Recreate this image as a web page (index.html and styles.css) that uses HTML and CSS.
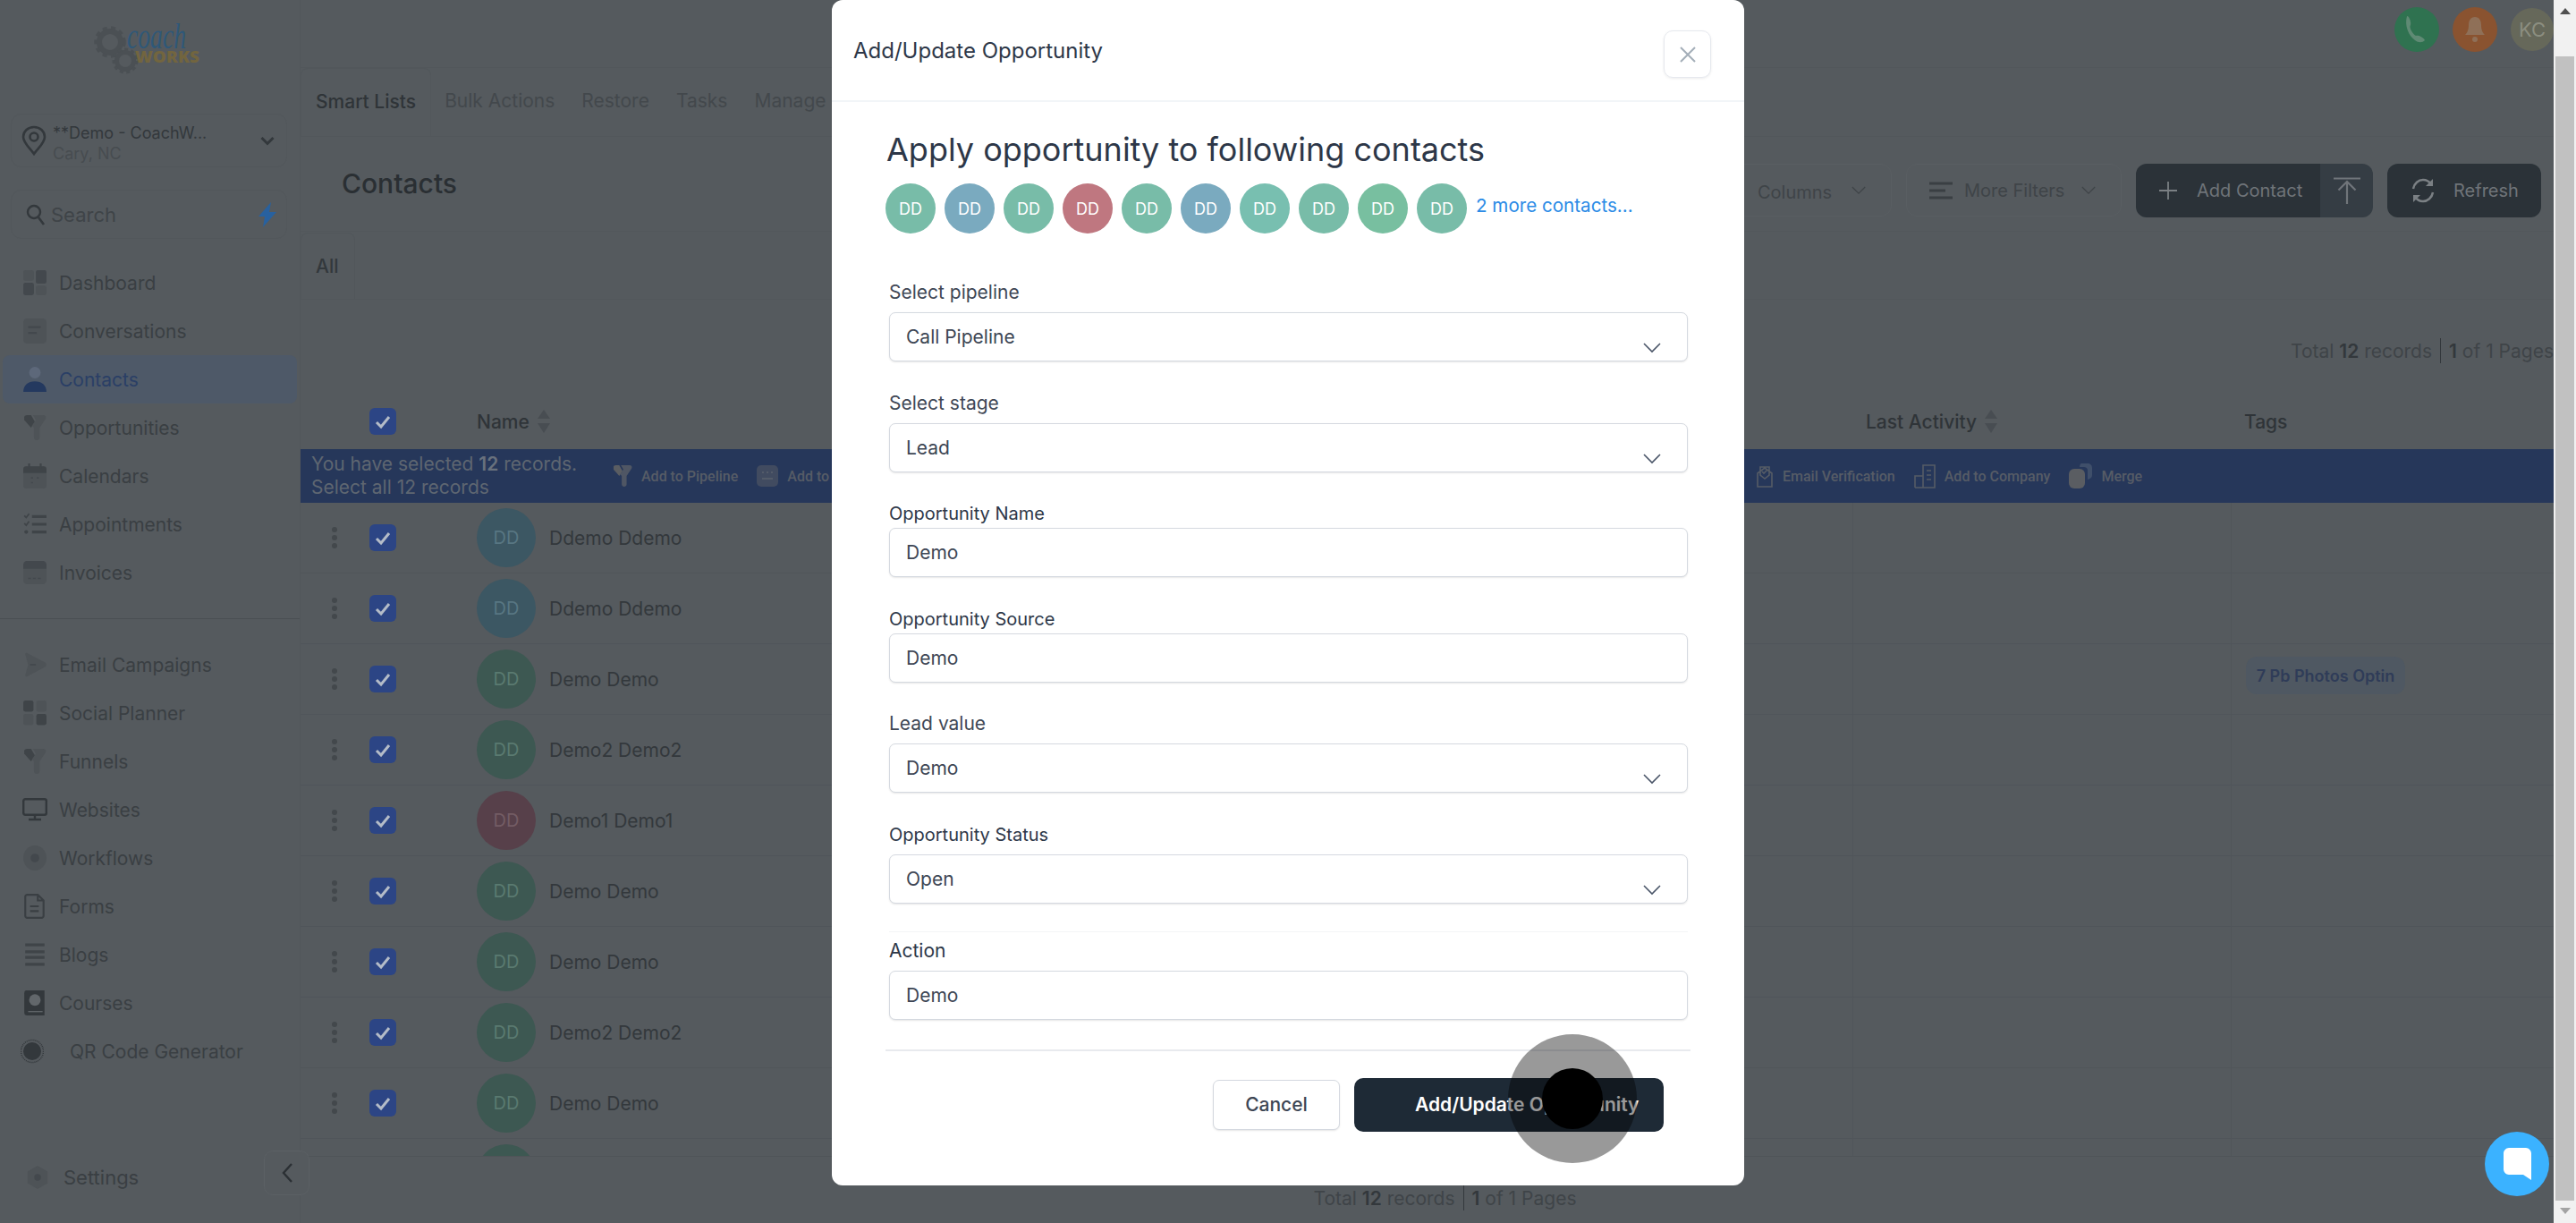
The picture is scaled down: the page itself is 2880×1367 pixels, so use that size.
FILE: index.html
```html
<!DOCTYPE html>
<html lang="en">
<head>
<meta charset="utf-8">
<title>Contacts</title>
<link rel="stylesheet" href="styles.css">
</head>
<body>
<svg class="sprite" aria-hidden="true">
  <symbol id="funnel" viewBox="0 0 24 26"><path d="M1 2c0-1 1-2 3-2h4l4 7-4 6L1 5z" fill="#3f4448"/><path d="M10 0h11c2 0 3 2 2 4l-6 9v10c0 4-6 4-6 0V13L9 11l4-6z" fill="#4e5357"/></symbol>
  <symbol id="sort" viewBox="0 0 16 28"><path d="M8 1l7 10H1z M1 16h14L8 27z" fill="#484d52"/></symbol>
  <symbol id="check" viewBox="0 0 30 30"><rect width="30" height="30" rx="6" fill="#2c4585"/><path d="M8 16l5 5 9-11" fill="none" stroke="#b4bcc8" stroke-width="3"/></symbol>
  <symbol id="dots" viewBox="0 0 8 26"><circle cx="4" cy="4" r="3" fill="#43484c"/><circle cx="4" cy="13" r="3" fill="#43484c"/><circle cx="4" cy="22" r="3" fill="#43484c"/></symbol>
  <symbol id="chev" viewBox="0 0 20 12"><path d="M1 1l9 9 9-9" fill="none" stroke="currentColor" stroke-width="1.6"/></symbol>
</svg>

<div class="page">
  <div class="app">
    <aside class="side">
      <div class="logo">
        <svg width="124" height="70" viewBox="0 0 124 70">
          <g fill="none" stroke="#4b5054">
            <circle cx="19" cy="33" r="12" stroke-width="6"/>
            <circle cx="19" cy="33" r="16" stroke-width="3.5" stroke-dasharray="5 4.5"/>
            <circle cx="36" cy="54" r="9.5" stroke-width="5"/>
            <circle cx="36" cy="54" r="13" stroke-width="3" stroke-dasharray="4 3.5"/>
          </g>
          <text class="logo-coach" x="38" y="40" textLength="66" lengthAdjust="spacingAndGlyphs">coach</text>
          <text class="logo-works" x="47" y="56" textLength="72" lengthAdjust="spacingAndGlyphs">WORKS</text>
        </svg>
      </div>
      <div class="loc">
        <svg class="pin" width="28" height="34" viewBox="0 0 28 34"><path d="M14 2C7 2 2 7 2 13c0 7 8 13 12 19 4-6 12-12 12-19 0-6-5-11-12-11z" fill="none" stroke="#33383c" stroke-width="2.6"/><circle cx="14" cy="13" r="4.5" fill="none" stroke="#33383c" stroke-width="2.6"/></svg>
        <div class="loc-text"><div class="loc-name">**Demo - CoachW...</div><div class="loc-sub">Cary, NC</div></div>
        <svg class="loc-chev" width="16" height="11" viewBox="0 0 16 11"><path d="M1.5 2l6.5 6.5L14.500 2" fill="none" stroke="#33383c" stroke-width="3"/></svg>
      </div>
      <div class="search">
        <svg width="22" height="26" viewBox="0 0 22 26"><circle cx="9" cy="10" r="7" fill="none" stroke="#33383c" stroke-width="2.4"/><path d="M14 16l6 8" stroke="#33383c" stroke-width="2.6"/></svg>
        <span class="search-text">Search</span>
        <svg class="bolt" width="20" height="28" viewBox="0 0 20 28"><path d="M14 0L0 16h7L5 28l15-17h-8l2-11z" fill="#28619f"/></svg>
      </div>
      <nav class="nav nav-a">
        <a class="nav-item"><svg class="ni" viewBox="0 0 24 26"><rect width="11" height="11" rx="2" fill="#4e5357"/><rect x="13" width="11" height="14" rx="2" fill="#43484d"/><rect y="13" width="11" height="13" rx="2" fill="#43484d"/><rect x="13" y="16" width="11" height="10" rx="2" fill="#4e5357"/></svg>Dashboard</a>
        <a class="nav-item"><svg class="ni" viewBox="0 0 24 26"><rect width="24" height="26" rx="4" fill="#4e5357"/><path d="M5 9h13M5 15h9" stroke="#43484d" stroke-width="2"/></svg>Conversations</a>
        <a class="nav-item active"><svg class="ni" viewBox="0 0 24 26"><circle cx="12" cy="6" r="6" fill="#5d687a"/><path d="M0 26c0-7 5-11 12-11s12 4 12 11z" fill="#24395f"/></svg>Contacts</a>
        <a class="nav-item"><svg class="ni" viewBox="0 0 24 26"><use href="#funnel"/></svg>Opportunities</a>
        <a class="nav-item"><svg class="ni" viewBox="0 0 24 26"><rect y="3" width="24" height="23" rx="3" fill="#4e5357"/><path d="M0 10V6c0-2 1-3 3-3h18c2 0 3 1 3 3v4z" fill="#3f4448"/><path d="M6 0v5M18 0v5" stroke="#3f4448" stroke-width="2"/><path d="M8 15h2M14 15h2M8 20h2" stroke="#43484d" stroke-width="1.500"/></svg>Calendars</a>
        <a class="nav-item"><svg class="ni" viewBox="0 0 24 26"><path d="M9 5h15M9 13h15M9 21h15" stroke="#3f4448" stroke-width="3"/><path d="M1 4l2 2 3-4M1 12l2 2 3-4" fill="none" stroke="#3f4448" stroke-width="1.600"/><circle cx="3" cy="21" r="2" fill="#3f4448"/></svg>Appointments</a>
        <a class="nav-item"><svg class="ni" viewBox="0 0 24 26"><rect y="1" width="24" height="24" rx="4" fill="#4e5357"/><path d="M0 9V5c0-2 2-4 4-4h16c2 0 4 2 4 4v4z" fill="#43484d"/><path d="M5 19h3M10 19h3M15 19h3" stroke="#43484d" stroke-width="1.500"/></svg>Invoices</a>
      </nav>
      <nav class="nav nav-b">
        <a class="nav-item"><svg class="ni" viewBox="0 0 24 26"><path d="M2 2c0-1 1-2 2-1l19 10c1 1 1 3 0 4L4 25c-1 1-2 0-2-1l3-11z" fill="#4e5357"/><path d="M7 13h6" stroke="#43484d" stroke-width="1.500"/></svg>Email Campaigns</a>
        <a class="nav-item"><svg class="ni" viewBox="0 0 24 26"><rect width="10.500" height="11.500" rx="2" fill="#3f4448"/><rect x="13.500" width="10.500" height="11.500" rx="2" fill="#4e5357"/><rect y="14" width="10.500" height="11.500" rx="2" fill="#4e5357"/><rect x="13.500" y="14" width="10.500" height="11.500" rx="2" fill="#3f4448"/></svg>Social Planner</a>
        <a class="nav-item"><svg class="ni" viewBox="0 0 24 26"><use href="#funnel"/></svg>Funnels</a>
        <a class="nav-item"><svg class="ni ni-w" viewBox="0 0 28 26"><rect x="1.200" y="1.200" width="25.600" height="17.600" rx="2" fill="none" stroke="#33383c" stroke-width="2.400"/><path d="M14 19v4M7 24h14" stroke="#33383c" stroke-width="2.400"/></svg>Websites</a>
        <a class="nav-item"><svg class="ni" viewBox="0 0 24 26"><ellipse cx="12" cy="13" rx="12" ry="13" fill="#4e5357"/><circle cx="12" cy="13" r="4.500" fill="#43484d"/></svg>Workflows</a>
        <a class="nav-item"><svg class="ni" viewBox="0 0 24 26"><path d="M4 1h11l6 6v16c0 1-1 2-2 2H4c-1 0-2-1-2-2V3c0-1 1-2 2-2z M15 1v6h6" fill="none" stroke="#3a3f43" stroke-width="2"/><path d="M7 13h9M7 18h9" stroke="#3a3f43" stroke-width="2"/></svg>Forms</a>
        <a class="nav-item"><svg class="ni" viewBox="0 0 24 26"><path d="M2 3h20M2 10h20M2 16h20M2 23h20" stroke="#3f4448" stroke-width="3"/></svg>Blogs</a>
        <a class="nav-item"><svg class="ni" viewBox="0 0 24 26"><path d="M3 0h19v26H4c-2 0-3-1-3-3V3c0-2 1-3 2-3z" fill="#33383c"/><circle cx="12" cy="10" r="6" fill="#62676b"/><path d="M5 22h15" stroke="#62676b" stroke-width="1.200"/></svg>Courses</a>
        <a class="nav-item nav-qr"><svg class="ni" viewBox="0 0 26 26"><circle cx="13" cy="13" r="12.500" fill="none" stroke="#33383c" stroke-width="1.500" stroke-dasharray="1 1"/><circle cx="13" cy="13" r="10" fill="#33383c"/></svg>QR Code Generator</a>
      </nav>
      <a class="settings"><svg class="ni" viewBox="0 0 28 28"><path d="M14 0l12 7v14l-12 7-12-7V7z" fill="#4e5357"/><circle cx="14" cy="14" r="4" fill="#43484d"/></svg>Settings</a>
      <button class="collapse"><svg width="14" height="24" viewBox="0 0 14 24"><path d="M12 2L3 12l9 10" fill="none" stroke="#2b3034" stroke-width="2.400"/></svg></button>
    </aside>

    <main class="main">
      <header class="topbar">
        <span class="circle circle-phone"><svg width="30" height="32" viewBox="0 0 30 32"><path d="M4 1c3 0 5 8 4 10-2 2 2 10 6 12 2-1 8 1 10 5-3 3-7 3-11 0C6 23 1 12 4 1z" fill="#5f8a74"/></svg></span>
        <span class="circle circle-bell"><svg width="24" height="30" viewBox="0 0 24 30"><path d="M12 1c-5 0-7 4-7 9 0 6-2 9-4 11h22c-2-2-4-5-4-11 0-5-2-9-7-9z" fill="#8f7058"/><circle cx="12" cy="26" r="3" fill="#8f7058"/></svg></span>
        <span class="circle circle-kc">KC</span>
      </header>
      <div class="tabs">
        <a class="tab tab-on">Smart Lists</a><a class="tab">Bulk Actions</a><a class="tab">Restore</a><a class="tab">Tasks</a><a class="tab">Manage</a>
      </div>
      <section class="head">
        <h1>Contacts</h1>
        <div class="head-actions">
          <button class="btn btn-columns">Columns<svg class="chev" width="16" height="10"><use href="#chev"/></svg></button>
          <button class="btn btn-filters"><svg width="26" height="20" viewBox="0 0 26 20"><path d="M0 2h26M0 10h18M0 18h26" stroke="#3a3f43" stroke-width="3"/></svg>More Filters<svg class="chev" width="16" height="10"><use href="#chev"/></svg></button>
          <div class="btn-split">
            <button class="btn-dark btn-add"><svg width="20" height="20" viewBox="0 0 20 20"><path d="M10 0v20M0 10h20" stroke="#7b8084" stroke-width="1.800"/></svg>Add Contact</button>
            <button class="btn-dark btn-up"><svg width="30" height="30" viewBox="0 0 30 30"><path d="M0 1.500h30M15 5v25M5.500 14.500L15 5l9.500 9.500" fill="none" stroke="#70757a" stroke-width="2.200"/></svg></button>
          </div>
          <button class="btn-dark btn-refresh"><svg width="30" height="30" viewBox="0 0 30 30"><path d="M4 13C5 7 10 3 15 3c4 0 7 2 9 5M26 17c-1 6-6 10-11 10-4 0-7-2-9-5" fill="none" stroke="#7b8084" stroke-width="2.500"/><path d="M26 2v8h-8zM4 28v-8h8z" fill="#7b8084"/></svg>Refresh</button>
        </div>
      </section>
      <div class="subtabs"><a class="subtab">All</a></div>
      <div class="total total-top"><span>Total <b>12</b> records</span><i></i><span><b>1</b> of 1 Pages</span></div>
      <div class="grid thead">
        <span></span>
        <svg class="cb" width="30" height="30"><use href="#check"/></svg>
        <span class="th">Name<svg width="16" height="28"><use href="#sort"/></svg></span>
        <span class="th th-pad">Last Activity<svg width="16" height="28"><use href="#sort"/></svg></span>
        <span class="th th-pad">Tags</span>
      </div>
      <div class="bar">
        <div class="bar-text">You have selected <b>12</b> records.<br>Select all 12 records</div>
        <div class="bar-group bar-left">
          <span class="act"><svg width="22" height="24" viewBox="0 0 24 26"><path d="M1 2c0-1 1-2 3-2h4l4 7-4 6L1 5z" fill="#5a5d62"/><path d="M10 0h11c2 0 3 2 2 4l-6 9v10c0 4-6 4-6 0V13L9 11l4-6z" fill="#4f5664"/></svg>Add to Pipeline</span>
          <span class="act"><svg width="24" height="24" viewBox="0 0 24 24"><rect width="24" height="24" rx="5" fill="#414b60"/><path d="M6 8h2M11 8h2M16 8h2M6 15h12" stroke="#5a616c" stroke-width="1.500"/></svg>Add to</span>
        </div>
        <div class="bar-group">
          <span class="act"><svg width="20" height="28" viewBox="0 0 20 28"><path d="M2 11l8-6 8 6v15H2zM5 4h10v9l-5 4-5-4z" fill="none" stroke="#565c66" stroke-width="1.600"/><path d="M7 9l2 2 4-4" fill="none" stroke="#565c66" stroke-width="1.600"/></svg>Email Verification</span>
          <span class="act"><svg width="24" height="28" viewBox="0 0 24 28"><path d="M1 27V14h9M10 27V2h13v25zM1 27h22M14 8h5M14 13h5M14 18h5" fill="none" stroke="#565c66" stroke-width="1.600"/></svg>Add to Company</span>
          <span class="act"><svg width="26" height="28" viewBox="0 0 26 28"><path d="M14 0h7c3 0 5 2 5 5v8c0 3-2 4-5 5V8c0-3-2-4-5-4h-4c0-2 1-4 2-4z" fill="#3f4f6a"/><rect y="6" width="18" height="22" rx="6" fill="#5a5d62"/></svg>Merge</span>
        </div>
      </div>
      <div class="rows">
        <div class="grid row"><svg class="dots" width="8" height="26"><use href="#dots"/></svg><svg class="cb" width="30" height="30"><use href="#check"/></svg><span class="who"><span class="av av-blue">DD</span>Ddemo Ddemo</span><span class="cell"></span><span class="cell"></span></div>
        <div class="grid row"><svg class="dots" width="8" height="26"><use href="#dots"/></svg><svg class="cb" width="30" height="30"><use href="#check"/></svg><span class="who"><span class="av av-blue">DD</span>Ddemo Ddemo</span><span class="cell"></span><span class="cell"></span></div>
        <div class="grid row"><svg class="dots" width="8" height="26"><use href="#dots"/></svg><svg class="cb" width="30" height="30"><use href="#check"/></svg><span class="who"><span class="av av-green">DD</span>Demo Demo</span><span class="cell"></span><span class="cell"><span class="tag">7 Pb Photos Optin</span></span></div>
        <div class="grid row"><svg class="dots" width="8" height="26"><use href="#dots"/></svg><svg class="cb" width="30" height="30"><use href="#check"/></svg><span class="who"><span class="av av-green">DD</span>Demo2 Demo2</span><span class="cell"></span><span class="cell"></span></div>
        <div class="grid row"><svg class="dots" width="8" height="26"><use href="#dots"/></svg><svg class="cb" width="30" height="30"><use href="#check"/></svg><span class="who"><span class="av av-red">DD</span>Demo1 Demo1</span><span class="cell"></span><span class="cell"></span></div>
        <div class="grid row"><svg class="dots" width="8" height="26"><use href="#dots"/></svg><svg class="cb" width="30" height="30"><use href="#check"/></svg><span class="who"><span class="av av-green">DD</span>Demo Demo</span><span class="cell"></span><span class="cell"></span></div>
        <div class="grid row"><svg class="dots" width="8" height="26"><use href="#dots"/></svg><svg class="cb" width="30" height="30"><use href="#check"/></svg><span class="who"><span class="av av-green">DD</span>Demo Demo</span><span class="cell"></span><span class="cell"></span></div>
        <div class="grid row"><svg class="dots" width="8" height="26"><use href="#dots"/></svg><svg class="cb" width="30" height="30"><use href="#check"/></svg><span class="who"><span class="av av-green">DD</span>Demo2 Demo2</span><span class="cell"></span><span class="cell"></span></div>
        <div class="grid row"><svg class="dots" width="8" height="26"><use href="#dots"/></svg><svg class="cb" width="30" height="30"><use href="#check"/></svg><span class="who"><span class="av av-green">DD</span>Demo Demo</span><span class="cell"></span><span class="cell"></span></div>
        <div class="grid row"><span></span><span></span><span class="who"><span class="av av-green"></span></span><span class="cell"></span><span class="cell"></span></div>
      </div>
      <div class="foot"><div class="total"><span>Total <b>12</b> records</span><i></i><span><b>1</b> of 1 Pages</span></div></div>
    </main>
  </div>

  <div class="scrollbar">
    <div class="sb-up"><span class="tri tri-up"></span></div>
    <div class="sb-thumb"></div>
    <div class="sb-down"><span class="tri tri-down"></span></div>
  </div>

  <section class="modal">
    <header class="modal-head">
      <span class="modal-title">Add/Update Opportunity</span>
      <button class="modal-x"><svg width="20" height="20" viewBox="0 0 20 20"><path d="M2 2l16 16M18 2L2 18" stroke="#a3aeb8" stroke-width="2"/></svg></button>
    </header>
    <div class="modal-body">
      <h2>Apply opportunity to following contacts</h2>
      <div class="people">
        <span class="pa pa-g">DD</span><span class="pa pa-b">DD</span><span class="pa pa-g">DD</span><span class="pa pa-r">DD</span><span class="pa pa-g">DD</span><span class="pa pa-b">DD</span><span class="pa pa-t">DD</span><span class="pa pa-g">DD</span><span class="pa pa-l">DD</span><span class="pa pa-g">DD</span>
        <a class="more">2 more contacts...</a>
      </div>
      <form class="form">
        <div class="field"><label class="lab lab-sel">Select pipeline</label><div class="box">Call Pipeline<svg class="box-chev" width="20" height="12"><use href="#chev"/></svg></div></div>
        <div class="field"><label class="lab lab-sel">Select stage</label><div class="box">Lead<svg class="box-chev" width="20" height="12"><use href="#chev"/></svg></div></div>
        <div class="field"><label class="lab lab-txt lab-dark">Opportunity Name</label><div class="box">Demo</div></div>
        <div class="field"><label class="lab lab-txt lab-dark">Opportunity Source</label><div class="box">Demo</div></div>
        <div class="field"><label class="lab lab-sel">Lead value</label><div class="box">Demo<svg class="box-chev" width="20" height="12"><use href="#chev"/></svg></div></div>
        <div class="field"><label class="lab lab-sel lab-dark">Opportunity Status</label><div class="box">Open<svg class="box-chev" width="20" height="12"><use href="#chev"/></svg></div></div>
        <div class="field field-action"><label class="lab lab-sel lab-action">Action</label><div class="box">Demo</div></div>
      </form>
      <footer class="modal-foot">
        <button class="m-cancel">Cancel</button>
        <button class="m-save">Add/Update Opportunity</button>
      </footer>
    </div>
  </section>

  <div class="cursor"><span class="cursor-dot"></span></div>
  <button class="chat"><svg width="31" height="36" viewBox="0 0 31 36"><path d="M6 0h19c3 0 6 3 6 6v30l-9-6H6c-3 0-6-3-6-6V6c0-3 3-6 6-6z" fill="#fff"/></svg></button>
</div>
</body>
</html>
```
FILE: styles.css
```css
* { box-sizing: border-box; }
html, body { margin: 0; height: 100%; }
body { font-family: Inter, "Noto Sans", sans-serif; background: #555a5e; color: #33383c; overflow: hidden; }
.sprite { position: absolute; width: 0; height: 0; }
button { font: inherit; border: 0; padding: 0; background: none; }
.page { position: relative; display: flex; width: 2880px; height: 1367px; overflow: hidden; }
.app { flex: 1; display: flex; min-width: 0; }

/* sidebar */
.side { position: relative; width: 336px; flex: none; display: flex; flex-direction: column; border-right: 1px solid #52575b; }
.logo { height: 127px; padding: 14px 0 0 104px; }
.logo-coach { font: italic 40px "Liberation Serif", serif; fill: #2f5878; }
.logo-works { font: 800 18px "Open Sans", sans-serif; fill: #72653f; }
.loc, .search { margin: 0 14px 0 12px; border: 1px solid #52575b; border-radius: 12px; display: flex; align-items: center; }
.loc { height: 60px; padding-left: 11px; gap: 7px; }
.loc-text { flex: 1; padding-top: 5px; }
.loc-name { font-size: 18px; line-height: 23px; color: #33383c; }
.loc-sub { font-size: 18px; line-height: 23px; color: #474c50; }
.loc-chev { margin-right: 13px; }
.search { height: 55px; margin-top: 25px; padding-left: 16px; gap: 6px; }
.search-text { flex: 1; font-size: 22px; color: #3f4448; }
.bolt { margin-right: 11px; }
.nav-a { margin-top: 22px; padding-bottom: 24px; border-bottom: 1px solid #4a4f53; }
.nav-b { margin-top: 24px; }
.nav-item { height: 54px; display: flex; align-items: center; gap: 14px; padding-left: 26px; font-size: 21px; color: #3a3f43; margin: 0 3px 0 0; }
.ni { width: 26px; height: 28px; flex: none; }
.ni-w { width: 28px; margin-left: -1px; margin-right: -1px; }
.nav-item.active { background: #4e5968; color: #2a3f66; border-radius: 8px; margin: 0 3px; padding-left: 23px; }
.nav-qr { padding-left: 23px; gap: 29px; }
.settings { margin-top: auto; margin-bottom: 37px; padding-left: 29px; display: flex; align-items: center; gap: 16px; font-size: 22px; color: #3a3f43; height: 28px; }
.collapse { position: absolute; left: 295px; top: 1286px; width: 51px; height: 50px; border: 1px solid #5b6064; border-radius: 10px; background: #555a5e; display: flex; align-items: center; justify-content: center; }

/* main */
.main { flex: 1; min-width: 0; display: flex; flex-direction: column; overflow: hidden; }
.topbar { height: 76px; flex: none; display: flex; justify-content: flex-end; gap: 15px; padding-top: 8px; border-bottom: 1px solid #52575b; }
.circle { width: 50px; height: 50px; border-radius: 50%; display: flex; align-items: center; justify-content: center; }
.circle-phone { background: #2f7250; }
.circle-bell { background: #8a5330; }
.circle-kc { background: #66685a; width: 48px; height: 48px; margin-top: 1px; color: #8c8e80; font-size: 22px; }
.tabs { height: 77px; flex: none; display: flex; border-bottom: 1px solid #52575b; }
.tab { display: flex; align-items: center; padding: 0 15px 3px; font-size: 21px; color: #43484c; }
.tab-on { padding: 0 16px 3px; font-weight: 500; color: #2f3438; border: 1px solid #52575b; border-bottom: 0; border-radius: 8px 8px 0 0; }
.head { height: 106px; flex: none; display: flex; justify-content: space-between; padding: 30px 14px 0 46px; border-bottom: 1px solid #52575b; }
h1 { margin: 0; font-size: 30px; line-height: 44px; font-weight: 500; color: #2a2f33; }
.head-actions { display: flex; gap: 16px; height: 60px; }
.btn { display: flex; align-items: center; border: 1px solid #595e62; border-radius: 12px; background: #555a5e; font-size: 20px; color: #3f4448; height: 59px; }
.chev { color: #3f4448; }
.btn-columns { width: 215px; padding: 4px 0 0 64px; gap: 22px; }
.btn-columns .chev { margin-top: -4px; }
.btn-filters { width: 241px; padding-left: 25px; gap: 13px; }
.btn-filters .chev { margin-left: 6px; }
.btn-split { display: flex; width: 265px; border-radius: 12px; overflow: hidden; }
.btn-dark { height: 60px; display: flex; align-items: center; background: #2b3238; color: #6f7478; font-size: 20px; }
.btn-add { width: 206px; padding-left: 26px; gap: 22px; }
.btn-up { flex: 1; justify-content: center; background: #353d44; }
.btn-refresh { width: 172px; padding-left: 25px; gap: 19px; border-radius: 12px; }
.subtabs { height: 76px; flex: none; border-bottom: 1px solid #52575b; display: flex; }
.subtab { width: 61px; display: flex; align-items: center; padding-left: 16px; font-size: 21px; font-weight: 500; color: #33383c; border: 1px solid #52575b; border-bottom: 0; border-radius: 8px 8px 0 0; margin-top: 1px; }
.total { display: flex; align-items: center; font-size: 21px; color: #3f4448; }
.total b { font-weight: 600; color: #33383c; }
.total i { width: 1px; height: 28px; background: #33383c; margin: 0 9px; }
.total-top { justify-content: flex-end; height: 100px; flex: none; padding-top: 14px; }
.grid { display: grid; grid-template-columns: 77px 120px 1538px 423px 1fr; align-items: center; }
.thead { height: 67px; flex: none; padding-top: 5px; }
.th { display: flex; align-items: center; gap: 8px; font-size: 21px; font-weight: 500; color: #2f3438; }
.th-pad { padding-left: 15px; }
.bar { height: 60px; flex: none; display: flex; align-items: center; background: #26375a; color: #5e6671; }
.bar-text { width: 349px; flex: none; padding-left: 12px; font-size: 21px; line-height: 26px; }
.bar-text b { font-weight: 600; color: #69717d; }
.bar-group { display: flex; align-items: center; gap: 21px; }
.bar-left { width: 1278px; flex: none; }
.act { display: flex; align-items: center; gap: 10px; font: 500 16px Roboto, sans-serif; color: #565c66; }
.rows { height: 731px; flex: none; overflow: hidden; border-bottom: 1px solid #4f5458; }
.row { height: 79px; border-bottom: 1px solid #50555a; }
.dots { margin-left: 34px; }
.who { display: flex; align-items: center; gap: 15px; font-size: 21px; color: #33383c; }
.cell { display: flex; align-items: center; height: 100%; border-left: 1px solid #50555a; padding-left: 16px; }
.av { width: 66px; height: 66px; border-radius: 50%; display: flex; align-items: center; justify-content: center; font-size: 20px; }
.av-blue { background: #3c5763; color: #587682; }
.av-green { background: #3d5852; color: #5a7a70; }
.av-red { background: #57404a; color: #735c64; }
.tag { display: flex; align-items: center; height: 42px; width: 178px; justify-content: center; margin-top: -8px; border-radius: 12px; background: #4f5862; font-size: 18px; font-weight: 600; color: #2f3c58; white-space: nowrap; }
.foot { flex: 1; display: flex; justify-content: center; padding: 32px 0 0 40px; }
.foot .total { align-self: flex-start; }

/* scrollbar */
.scrollbar { width: 25px; flex: none; background: #f1f1f1; display: flex; flex-direction: column; position: relative; z-index: 1; }
.sb-up { height: 63px; display: flex; justify-content: center; padding-top: 9px; }
.sb-thumb { flex: 1; margin: 0 2px; background: #c1c1c1; }
.sb-down { height: 25px; display: flex; justify-content: center; padding-top: 8px; }
.tri { width: 0; height: 0; border-left: 6px solid transparent; border-right: 6px solid transparent; }
.tri-up { border-bottom: 7px solid #505050; }
.tri-down { border-top: 7px solid #a3a3a3; }

/* modal */
.modal { position: absolute; left: 930px; top: 0; width: 1020px; height: 1325px; background: #fff; border-radius: 12px; color: #2d3748; z-index: 2; }
.modal-head { height: 114px; display: flex; justify-content: space-between; padding: 34px 37px 0 24px; border-bottom: 2px solid #f2f5f8; }
.modal-title { font-size: 24px; line-height: 46px; color: #2d3748; }
.modal-x { width: 53px; height: 53px; border: 1px solid #e6e9ee; border-radius: 10px; box-shadow: 0 1px 3px rgba(0,0,0,.08); display: flex; align-items: center; justify-content: center; }
.modal-body { padding: 30px 60px 0; }
h2 { margin: 0; padding-left: 1px; font-size: 36px; line-height: 46px; font-weight: 400; color: #2d3748; }
.people { display: flex; align-items: center; gap: 10px; margin-top: 15px; height: 56px; }
.pa { width: 56px; height: 56px; border-radius: 50%; color: #fff; font-size: 18px; display: flex; align-items: center; justify-content: center; flex: none; }
.pa-g { background: #78bca8; }
.pa-b { background: #7aaabf; }
.pa-r { background: #bf7780; }
.pa-t { background: #78bfb0; }
.pa-l { background: #78bfa0; }
.more { margin-top: -8px; font-size: 20.6px; color: #2b8be6; }
.form { padding: 0 3px 0 4px; margin-top: 52px; }
.field { margin-top: 32.5px; }
.field:first-child { margin-top: 0; }
.lab { display: block; font-size: 21px; line-height: 28px; color: #3f4856; }
.lab-dark { font-size: 20px; color: #2d3748; }
.lab-action { color: #2d3748; }
.lab-sel { margin-bottom: 8px; }
.lab-txt { margin-bottom: 2px; }
.box { position: relative; height: 55px; padding-left: 18px; display: flex; align-items: center; font-size: 21px; color: #3d4654; border: 1px solid #d5d9e0; border-radius: 7px; box-shadow: 0 1px 2px rgba(0,0,0,.1); background: #fff; }
.box-chev { position: absolute; right: 29px; top: 33px; color: #4a5568; }
.field-action { margin-top: 31px; border-top: 1px solid #f3f4f6; padding-top: 7px; }
.modal-foot { margin-top: 33px; border-top: 2px solid #e8eaee; padding: 30px 30px 0 0; display: flex; justify-content: flex-end; align-items: center; gap: 16px; }
.m-cancel { width: 142px; height: 56px; background: #fff; border: 1px solid #d5d9e0; border-radius: 7px; box-shadow: 0 1px 2px rgba(0,0,0,.1); font-size: 21px; font-weight: 500; color: #3d4654; }
.m-save { width: 346px; height: 60px; background: #1e2a36; border-radius: 10px; font-size: 21px; font-weight: 600; color: #fff; text-align: left; padding-left: 68px; }

/* overlays */
.cursor { position: absolute; left: 1686px; top: 1156px; width: 144px; height: 144px; border-radius: 50%; background: rgba(0,0,0,.4); display: flex; align-items: center; justify-content: center; z-index: 3; }
.cursor-dot { width: 68px; height: 68px; border-radius: 50%; background: #000; }
.chat { position: absolute; left: 2778px; top: 1265px; width: 72px; height: 72px; border-radius: 50%; background: #3bb2ff; display: flex; align-items: center; justify-content: center; z-index: 3; }
```
